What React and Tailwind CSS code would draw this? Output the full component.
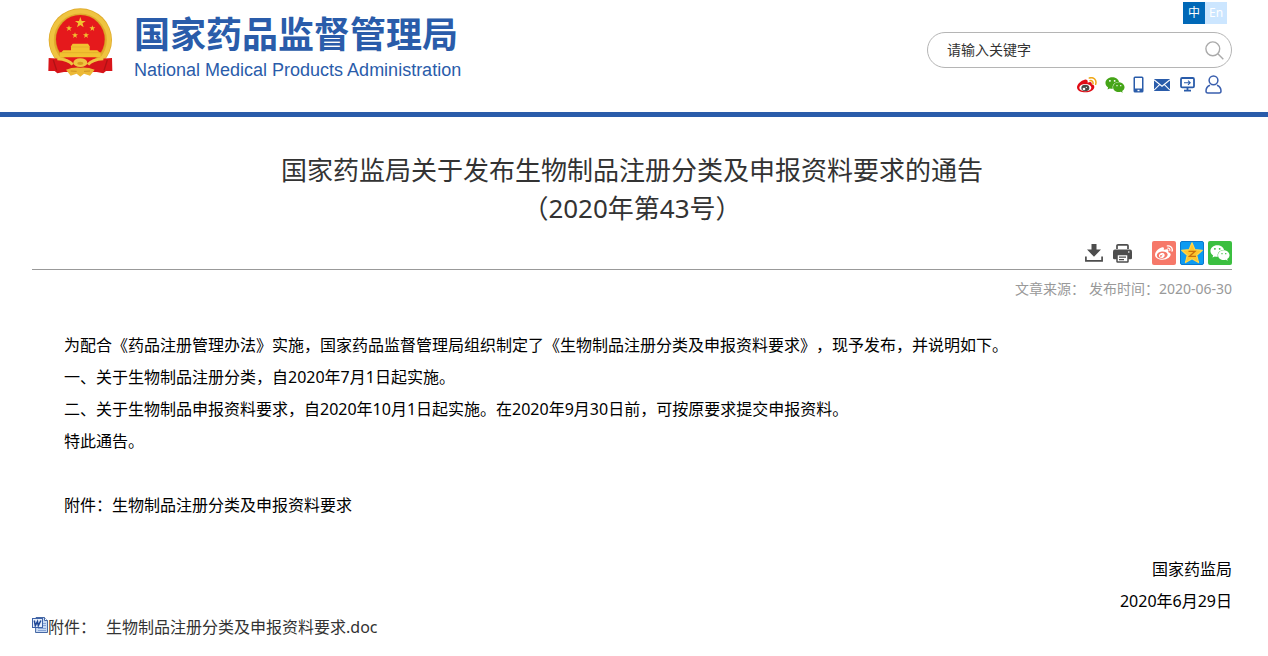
import React from "react";
import { FaWeixin, FaWeibo } from "react-icons/fa";

const STAR = "M0 -10 2.4 -3.1 9.5 -3.1 3.8 1.2 5.9 8.1 0 4 -5.9 8.1 -3.8 1.2 -9.5 -3.1 -2.4 -3.1Z";

function Emblem() {
  return (
    <svg viewBox="24 24 195 210" className="h-[70px] w-[65px] shrink-0" aria-hidden="true">
      <circle cx="121" cy="120" r="95" fill="#e0ab2c" />
      <circle cx="121" cy="120" r="86" fill="none" stroke="#efc440" strokeWidth="13" />
      <circle cx="121" cy="119" r="75" fill="#d79b20" />
      <circle cx="121" cy="118" r="73" fill="#e5191c" />
      <g fill="#f2c230">
        <path d={STAR} transform="translate(121 68) scale(1.7)" />
        <path d={STAR} transform="translate(87 85) scale(.95)" />
        <path d={STAR} transform="translate(157 85) scale(.95)" />
        <path d={STAR} transform="translate(105 106) scale(.95)" />
        <path d={STAR} transform="translate(138 106) scale(.95)" />
        <path d="M98 131h46l6 9H92zM93 140h56v12H93zM64 157l6-6h102l6 6zM60 157h122v15H60z" />
      </g>
      <path d="M62 158h118M93 141h56" stroke="#dba226" strokeWidth="1.500" />
      <path d="M26 174 60 176 121 190 182 176 216 174 217 213 198 213 190 220 170 216 72 216 52 220 44 213 25 213Z" fill="#d8151a" />
      <path d="M40 180 50 211M202 180 192 211" stroke="#b01215" strokeWidth="4" />
      <path d="M58 176H184L166 186 138 184 121 178 104 184 76 186Z" fill="#e5191c" />
      <path d="M52 176Q86 178 98 194M190 176Q156 178 144 194" fill="none" stroke="#efc440" strokeWidth="9" />
      <ellipse cx="121" cy="188" rx="21" ry="13" fill="#efc440" />
      <ellipse cx="121" cy="190" rx="9" ry="5" fill="#d79b20" />
      <path d="M78 209Q98 201 121 203 144 201 164 209L150 227 132 221 121 230 110 221 92 227Z" fill="#ecb936" />
      <path d="M92 213 110 214M150 213 132 214" fill="none" stroke="#cf9320" strokeWidth="3" />
    </svg>
  );
}

function WeiboColor() {
  return (
    <svg viewBox="0 0 60 48" className="h-4 w-5" aria-hidden="true">
      <path d="M23 8C12 10 0 22 0 31c0 11 13 15 25 15 15 0 27-7 27-16 0-5-4-7-8-8 2-5-2-9-12-5 1-6-2-10-9-9z" fill="#e00b14" />
      <ellipse cx="25" cy="32" rx="18" ry="11" fill="#fff" />
      <ellipse cx="25" cy="33" rx="12" ry="9.500" fill="#4a4a45" />
      <circle cx="21" cy="36" r="4" fill="#fff" />
      <circle cx="28" cy="31" r="2" fill="#fff" />
      <path d="M37 3C50-1 60 9 56 22M39 11c6-1 10 3 9 9" fill="none" stroke="#f0a818" strokeWidth="4.500" strokeLinecap="round" />
    </svg>
  );
}

function PhoneIcon() {
  return (
    <svg viewBox="0 0 11 17" className="h-[17px] w-[11px]" aria-hidden="true">
      <rect x="0.500" y="0.500" width="10" height="16" rx="1.500" fill="#2a5caa" />
      <rect x="2" y="2" width="7" height="10.500" fill="#fff" />
      <rect x="4.500" y="13.800" width="2" height="1.400" fill="#fff" />
    </svg>
  );
}

function MailIcon() {
  return (
    <svg viewBox="0 0 16 12" className="h-3 w-4" aria-hidden="true">
      <rect width="16" height="12" fill="#2a5caa" />
      <path d="M0 .8 8 7.2 16 .8M0 11.2 5.6 5.6M16 11.2 10.4 5.6" fill="none" stroke="#fff" strokeWidth="1.1" />
    </svg>
  );
}

function MonitorIcon() {
  return (
    <svg viewBox="0 0 15 15" className="h-[15px] w-[15px]" fill="none" stroke="#2a5caa" aria-hidden="true">
      <rect x="1" y="1" width="13" height="9.400" rx="1.200" strokeWidth="1.800" />
      <path d="M4 5.7h6M8 3.6l2.2 2.1L8 7.8" strokeWidth="1.1" />
      <path d="M7.5 10.5v3M4 13.7h7" strokeWidth="1.800" />
    </svg>
  );
}

function UserIcon() {
  return (
    <svg viewBox="0 0 17 19" className="h-[19px] w-[17px]" fill="none" stroke="#3a5fae" strokeWidth="1.500" aria-hidden="true">
      <circle cx="8.500" cy="5.300" r="4.400" />
      <path d="M5 10.2C2.400 11.200 1 13.500 1 16c0 1.300.6 2 1.800 2h11.400c1.200 0 1.800-.7 1.800-2 0-2.500-1.400-4.800-4-5.800" />
    </svg>
  );
}

function SearchIcon() {
  return (
    <svg viewBox="0 0 19 19" className="h-[19px] w-[19px]" fill="none" stroke="#aaa" strokeWidth="1.400" aria-hidden="true">
      <circle cx="7.800" cy="7.800" r="6.900" />
      <path d="M12.800 12.800 18.300 18.300" />
    </svg>
  );
}

function DownloadIcon() {
  return (
    <svg viewBox="0 0 18 18" className="h-[18px] w-[18px]" aria-hidden="true">
      <path d="M6.500 0h5v5.500H16L9 12.800 2 5.500h4.500z" fill="#4d4d4d" />
      <path d="M.9 12.500v4.400h16.200v-4.400" fill="none" stroke="#4d4d4d" strokeWidth="1.700" />
    </svg>
  );
}

function PrinterIcon() {
  return (
    <svg viewBox="0 0 19 19" className="h-[19px] w-[19px]" aria-hidden="true">
      <path d="M4 5V1.800Q4 .9 5 .9h9q1 0 1 .9V5" fill="none" stroke="#4d4d4d" strokeWidth="1.700" />
      <path d="M2 5.500h15q2 0 2 2V14q0 1.200-1.200 1.200H1.200Q0 15.200 0 14V7.500q0-2 2-2z" fill="#4d4d4d" />
      <rect x="4" y="10.500" width="11" height="7.600" rx=".6" fill="#fff" stroke="#4d4d4d" strokeWidth="1.500" />
      <path d="M6 13.200h7M6 15.700h5" stroke="#4d4d4d" strokeWidth="1.200" />
      <circle cx="15.800" cy="8" r=".8" fill="#fff" />
    </svg>
  );
}

function QzoneIcon() {
  return (
    <svg viewBox="0 0 24 24" className="h-6 w-6" aria-hidden="true">
      <rect x=".5" y=".5" width="23" height="23" rx="1.500" fill="#0d9bf2" stroke="#0a78cc" />
      <path
        d="M12 1.800 14.900 8.700 22.300 9.300 16.700 14.200 18.500 21.600 12 17.700 5.500 21.600 7.300 14.200 1.700 9.300 9.100 8.700Z"
        fill="#fdc52c"
        stroke="#ffd64a"
        strokeWidth="1.200"
        strokeLinejoin="round"
      />
      <path d="M8.500 10.300h6.500l-5.500 5h6.500" fill="none" stroke="#c8700c" strokeWidth="1.300" />
    </svg>
  );
}

function WordIcon() {
  return (
    <svg viewBox="0 0 16 16" className="h-4 w-4 shrink-0" aria-hidden="true">
      <path d="M4 .5h8.500l3 3v12H3.500z" fill="#c9daf3" stroke="#4668a4" />
      <path d="M12.500.5v3h3" fill="#fff" stroke="#4668a4" />
      <path d="M11 6.500h3M11 8.500h3M6 11.500h8M6 13.500h8" stroke="#86a4d6" />
      <rect x=".5" y="1.500" width="10" height="9" fill="#e8f0fb" stroke="#3f63a8" />
      <path d="M2.300 3.500 3.300 8.700 5.500 4.500 6.300 8.700 8.900 3.500" fill="none" stroke="#1f4796" strokeWidth="1.500" />
    </svg>
  );
}

const BODY = [
  "为配合《药品注册管理办法》实施，国家药品监督管理局组织制定了《生物制品注册分类及申报资料要求》，现予发布，并说明如下。",
  "一、关于生物制品注册分类，自2020年7月1日起实施。",
  "二、关于生物制品申报资料要求，自2020年10月1日起实施。在2020年9月30日前，可按原要求提交申报资料。",
  "特此通告。",
];

export default function App() {
  return (
    <div className="bg-white font-['Noto_Sans','Noto_Sans_CJK_SC',sans-serif] text-black [text-spacing-trim:space-all]" lang="zh-CN">
      <header className="flex justify-between border-b-5 border-[#2a5caa] pr-9 pb-[18px] pl-12">
        <a href="#home" className="flex gap-[21px] pt-2 text-[#2a5caa]">
          <Emblem />
          <span className="flex flex-col pt-1">
            <span className="text-[36px] leading-[46px] font-bold">国家药品监督管理局</span>
            <span className="font-['Liberation_Sans',sans-serif] text-[18px] leading-6">
              National Medical Products Administration
            </span>
          </span>
        </a>
        <div className="flex w-[305px] flex-col pt-0.5">
          <div className="flex justify-end pr-[5px] text-xs leading-[22px] text-white">
            <button type="button" className="h-[22px] w-[22px] bg-[#0068b7]">中</button>
            <button type="button" className="h-[22px] w-[22px] bg-[#cce6ff]">En</button>
          </div>
          <form className="mt-2 flex h-9 items-center rounded-full border border-[#b5b5b5] pr-[7px] pl-[19px]" onSubmit={(e) => e.preventDefault()}>
            <input
              type="text"
              aria-label="请输入关键字"
              placeholder="请输入关键字"
              className="min-w-0 flex-1 bg-transparent text-sm outline-none placeholder:text-[#333]"
            />
            <button type="submit" aria-label="搜索"><SearchIcon /></button>
          </form>
          <nav className="mt-[7px] flex h-[19px] items-center justify-end gap-2.5 pr-[10px]">
            <span className="flex items-center gap-2">
              <a href="#weibo" aria-label="微博"><WeiboColor /></a>
              <a href="#wechat" aria-label="微信"><FaWeixin className="h-5 w-5 text-[#45a518]" /></a>
              <a href="#mobile" aria-label="手机版"><PhoneIcon /></a>
            </span>
            <a href="#mail" aria-label="邮箱"><MailIcon /></a>
            <a href="#screen" aria-label="电脑版"><MonitorIcon /></a>
            <a href="#user" aria-label="个人中心"><UserIcon /></a>
          </nav>
        </div>
      </header>

      <main className="pt-[34px] pr-9 pb-4 pl-8">
        <h1 className="text-center text-[26px] leading-[38px] text-[#333]">
          国家药监局关于发布生物制品注册分类及申报资料要求的通告
          <br />
          （2020年第43号）
        </h1>

        <div className="mt-3.5 flex items-center justify-end gap-1 border-b border-[#999] pb-1">
          <button type="button" aria-label="下载" className="mr-1.5"><DownloadIcon /></button>
          <button type="button" aria-label="打印" className="mr-4"><PrinterIcon /></button>
          <a href="#share-weibo" aria-label="分享到微博" className="flex h-6 w-6 items-center justify-center rounded-xs bg-[#f67869] text-white">
            <FaWeibo className="h-[18px] w-[18px]" />
          </a>
          <a href="#share-qzone" aria-label="分享到QQ空间"><QzoneIcon /></a>
          <a href="#share-wechat" aria-label="分享到微信" className="flex h-6 w-6 items-center justify-center rounded-xs bg-[#3bbf40] text-white">
            <FaWeixin className="h-5 w-5" />
          </a>
        </div>
        <p className="mt-[7px] flex justify-end gap-1 text-sm leading-6 text-[#999]">
          <span>文章来源：</span>
          <span>发布时间：2020-06-30</span>
        </p>

        <article className="mt-7 text-base leading-8">
          {BODY.map((line) => (
            <p key={line} className="indent-8">{line}</p>
          ))}
          <p className="mt-8 indent-8">附件：生物制品注册分类及申报资料要求</p>
          <p className="mt-8 text-right">国家药监局</p>
          <p className="text-right">2020年6月29日</p>
        </article>

        <p className="flex items-start text-base leading-5 text-[#333]">
          <WordIcon />
          <span>附件：</span>
          <a href="#attachment" className="ml-2.5">生物制品注册分类及申报资料要求.doc</a>
        </p>
      </main>
    </div>
  );
}
